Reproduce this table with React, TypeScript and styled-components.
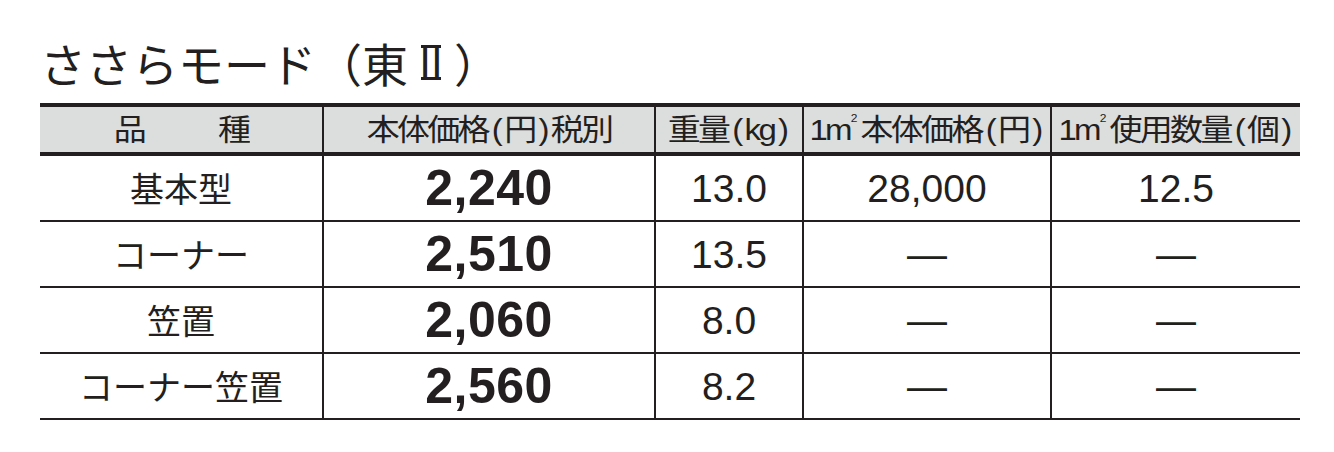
import React from "react";
import styled, { createGlobalStyle } from "styled-components";

const ink = "#231f20";

const Global = createGlobalStyle`
  html, body { margin: 0; padding: 0; background: #ffffff; }
  body { font-family: "Noto Sans CJK JP", sans-serif; color: ${ink}; }
`;

const Page = styled.div`
  width: 1334px;
  height: 452px;
  box-sizing: border-box;
  padding: 39px 34px 0 40px;
  display: flex;
  flex-direction: column;
`;

const Title = styled.h1`
  margin: 0 0 18px;
  height: 46px;
  display: flex;
  align-items: flex-start;
  font-family: "Noto Sans CJK JP", sans-serif;
  font-weight: 400;
  font-size: 46px;
  line-height: 46px;
  color: ${ink};
  white-space: nowrap;
`;

/* Roman numeral Ⅱ with its top and bottom bars, as in the reference */
const Numeral = styled.span`
  display: flex;
  justify-content: center;
  align-items: flex-start;
  box-sizing: border-box;
  width: 20px;
  height: 35px;
  margin: 6px 13px 0;
  border-top: 3px solid ${ink};
  border-bottom: 3px solid ${ink};
  font-size: 40px;
  line-height: 24px;
`;

const Table = styled.div`
  display: flex;
  flex-direction: column;
  width: 1260px;
`;

const Row = styled.div<{ $head?: boolean }>`
  display: grid;
  grid-template-columns: 282px 332px 148px 248px 250px;
  height: ${(p) => (p.$head ? 45 : 64)}px;
  background: ${(p) => (p.$head ? "#dcdddd" : "#ffffff")};
  border-top: ${(p) => (p.$head ? `4px solid ${ink}` : "none")};
  border-bottom: ${(p) => (p.$head ? 4 : 2)}px solid ${ink};
`;

const Cell = styled.div`
  display: flex;
  align-items: center;
  justify-content: center;
  min-width: 0;
  white-space: nowrap;
  & + & {
    border-left: 2px solid ${ink};
  }
`;

const HeadText = styled.span<{ $gap?: number }>`
  display: inline-flex;
  align-items: center;
  gap: ${(p) => p.$gap ?? 0}px;
  font-family: "Liberation Sans", "Noto Sans CJK JP", sans-serif;
  font-size: 33px;
  line-height: 1;
  letter-spacing: -2.7px;
  color: ${ink};
  transform: scaleY(0.9);
`;

const Paren = styled.span`
  margin: 0 4px;
`;

const Sup = styled.span`
  font-size: 12px;
  line-height: 1;
  align-self: flex-start;
  margin: -2px 3px 0 1px;
  letter-spacing: 0;
`;

const Name = styled.span`
  font-family: "Noto Sans CJK JP", sans-serif;
  font-size: 34px;
  line-height: 1;
  color: ${ink};
`;

const Price = styled.span`
  font-family: "Liberation Sans", Arial, sans-serif;
  font-weight: 700;
  font-size: 50px;
  line-height: 1;
  letter-spacing: 0.5px;
  color: ${ink};
`;

const Num = styled.span`
  font-family: "Liberation Sans", Arial, sans-serif;
  font-size: 39px;
  line-height: 1;
  color: ${ink};
`;

const Dash = styled.span`
  font-family: "Liberation Sans", Arial, sans-serif;
  font-size: 40px;
  line-height: 1;
  color: ${ink};
`;

type Item = {
  name: string;
  price: string;
  weight: string;
  perSqm: string | null;
  qty: string | null;
};

const items: Item[] = [
  { name: "基本型", price: "2,240", weight: "13.0", perSqm: "28,000", qty: "12.5" },
  { name: "コーナー", price: "2,510", weight: "13.5", perSqm: null, qty: null },
  { name: "笠置", price: "2,060", weight: "8.0", perSqm: null, qty: null },
  { name: "コーナー笠置", price: "2,560", weight: "8.2", perSqm: null, qty: null },
];

const Value = ({ v }: { v: string | null }) =>
  v === null ? <Dash>—</Dash> : <Num>{v}</Num>;

export default function App() {
  return (
    <>
      <Global />
      <Page>
        <Title>
          ささらモード（東<Numeral>Ⅱ</Numeral>）
        </Title>
        <Table>
          <Row $head>
            <Cell>
              <HeadText $gap={74}>
                <span>品</span>
                <span>種</span>
              </HeadText>
            </Cell>
            <Cell>
              <HeadText>
                本体価格<Paren>(</Paren>円<Paren>)</Paren>税別
              </HeadText>
            </Cell>
            <Cell>
              <HeadText>
                重量<Paren>(</Paren>kg<Paren>)</Paren>
              </HeadText>
            </Cell>
            <Cell>
              <HeadText>
                1m<Sup>2</Sup>本体価格<Paren>(</Paren>円<Paren>)</Paren>
              </HeadText>
            </Cell>
            <Cell>
              <HeadText>
                1m<Sup>2</Sup>使用数量<Paren>(</Paren>個<Paren>)</Paren>
              </HeadText>
            </Cell>
          </Row>
          {items.map((it) => (
            <Row key={it.name}>
              <Cell>
                <Name>{it.name}</Name>
              </Cell>
              <Cell>
                <Price>{it.price}</Price>
              </Cell>
              <Cell>
                <Num>{it.weight}</Num>
              </Cell>
              <Cell>
                <Value v={it.perSqm} />
              </Cell>
              <Cell>
                <Value v={it.qty} />
              </Cell>
            </Row>
          ))}
        </Table>
      </Page>
    </>
  );
}
